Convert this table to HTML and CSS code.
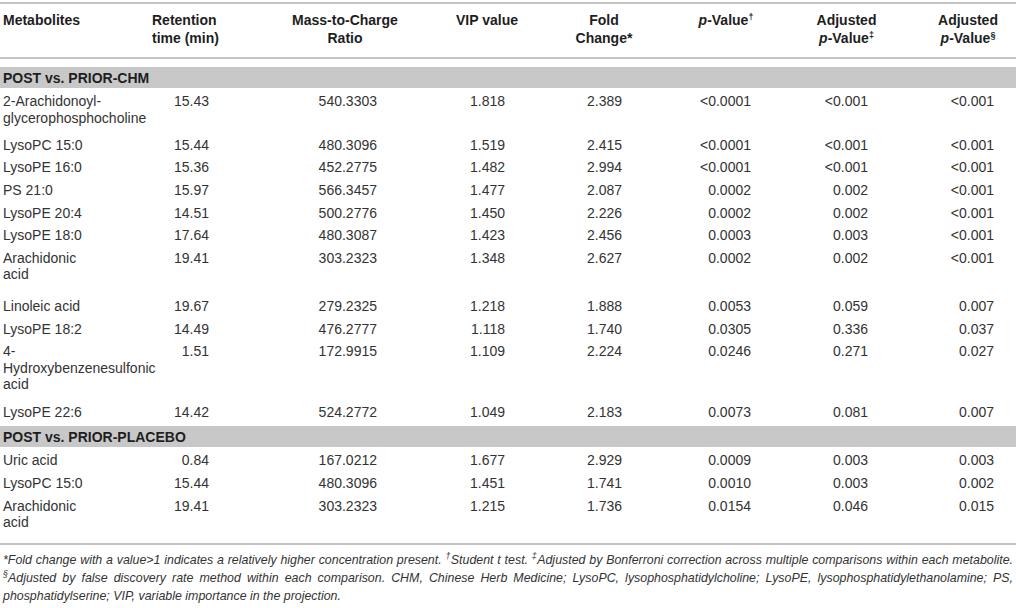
FILE: index.html
```html
<!DOCTYPE html>
<html lang="en">
<head>
<meta charset="utf-8">
<title>Metabolites table</title>
<link rel="stylesheet" href="styles.css">
</head>
<body>
<div class="table">
  <div class="row head">
    <div class="c1">Metabolites</div>
    <div class="c2">Retention<br>time (min)</div>
    <div class="c3">Mass-to-Charge<br>Ratio</div>
    <div class="c4">VIP value</div>
    <div class="c5">Fold<br>Change*</div>
    <div class="c6"><i>p</i>-Value<sup>†</sup></div>
    <div class="c7">Adjusted<br><i>p</i>-Value<sup>‡</sup></div>
    <div class="c8">Adjusted<br><i>p</i>-Value<sup>§</sup></div>
  </div>

  <div class="band">POST vs. PRIOR-CHM</div>

  <div class="row d two">
    <div class="c1">2-Arachidonoyl-<br>glycerophosphocholine</div>
    <div class="c2">15.43</div><div class="c3">540.3303</div><div class="c4">1.818</div><div class="c5">2.389</div>
    <div class="c6">&lt;0.0001</div><div class="c7">&lt;0.001</div><div class="c8">&lt;0.001</div>
  </div>
  <div class="row d">
    <div class="c1">LysoPC 15:0</div>
    <div class="c2">15.44</div><div class="c3">480.3096</div><div class="c4">1.519</div><div class="c5">2.415</div>
    <div class="c6">&lt;0.0001</div><div class="c7">&lt;0.001</div><div class="c8">&lt;0.001</div>
  </div>
  <div class="row d">
    <div class="c1">LysoPE 16:0</div>
    <div class="c2">15.36</div><div class="c3">452.2775</div><div class="c4">1.482</div><div class="c5">2.994</div>
    <div class="c6">&lt;0.0001</div><div class="c7">&lt;0.001</div><div class="c8">&lt;0.001</div>
  </div>
  <div class="row d">
    <div class="c1">PS 21:0</div>
    <div class="c2">15.97</div><div class="c3">566.3457</div><div class="c4">1.477</div><div class="c5">2.087</div>
    <div class="c6">0.0002</div><div class="c7">0.002</div><div class="c8">&lt;0.001</div>
  </div>
  <div class="row d">
    <div class="c1">LysoPE 20:4</div>
    <div class="c2">14.51</div><div class="c3">500.2776</div><div class="c4">1.450</div><div class="c5">2.226</div>
    <div class="c6">0.0002</div><div class="c7">0.002</div><div class="c8">&lt;0.001</div>
  </div>
  <div class="row d">
    <div class="c1">LysoPE 18:0</div>
    <div class="c2">17.64</div><div class="c3">480.3087</div><div class="c4">1.423</div><div class="c5">2.456</div>
    <div class="c6">0.0003</div><div class="c7">0.003</div><div class="c8">&lt;0.001</div>
  </div>
  <div class="row d two wide">
    <div class="c1">Arachidonic<br>acid</div>
    <div class="c2">19.41</div><div class="c3">303.2323</div><div class="c4">1.348</div><div class="c5">2.627</div>
    <div class="c6">0.0002</div><div class="c7">0.002</div><div class="c8">&lt;0.001</div>
  </div>
  <div class="row d">
    <div class="c1">Linoleic acid</div>
    <div class="c2">19.67</div><div class="c3">279.2325</div><div class="c4">1.218</div><div class="c5">1.888</div>
    <div class="c6">0.0053</div><div class="c7">0.059</div><div class="c8">0.007</div>
  </div>
  <div class="row d">
    <div class="c1">LysoPE 18:2</div>
    <div class="c2">14.49</div><div class="c3">476.2777</div><div class="c4">1.118</div><div class="c5">1.740</div>
    <div class="c6">0.0305</div><div class="c7">0.336</div><div class="c8">0.037</div>
  </div>
  <div class="row d three">
    <div class="c1">4-<br>Hydroxybenzenesulfonic<br>acid</div>
    <div class="c2">1.51</div><div class="c3">172.9915</div><div class="c4">1.109</div><div class="c5">2.224</div>
    <div class="c6">0.0246</div><div class="c7">0.271</div><div class="c8">0.027</div>
  </div>
  <div class="row d">
    <div class="c1">LysoPE 22:6</div>
    <div class="c2">14.42</div><div class="c3">524.2772</div><div class="c4">1.049</div><div class="c5">2.183</div>
    <div class="c6">0.0073</div><div class="c7">0.081</div><div class="c8">0.007</div>
  </div>

  <div class="band second">POST vs. PRIOR-PLACEBO</div>

  <div class="row d">
    <div class="c1">Uric acid</div>
    <div class="c2">0.84</div><div class="c3">167.0212</div><div class="c4">1.677</div><div class="c5">2.929</div>
    <div class="c6">0.0009</div><div class="c7">0.003</div><div class="c8">0.003</div>
  </div>
  <div class="row d">
    <div class="c1">LysoPC 15:0</div>
    <div class="c2">15.44</div><div class="c3">480.3096</div><div class="c4">1.451</div><div class="c5">1.741</div>
    <div class="c6">0.0010</div><div class="c7">0.003</div><div class="c8">0.002</div>
  </div>
  <div class="row d two">
    <div class="c1">Arachidonic<br>acid</div>
    <div class="c2">19.41</div><div class="c3">303.2323</div><div class="c4">1.215</div><div class="c5">1.736</div>
    <div class="c6">0.0154</div><div class="c7">0.046</div><div class="c8">0.015</div>
  </div>
</div>

<div class="notes">
  <div class="j">*Fold change with a value&gt;1 indicates a relatively higher concentration present. <sup>†</sup>Student t test. <sup>‡</sup>Adjusted by Bonferroni correction across multiple comparisons within each metabolite.</div>
  <div class="j"><sup>§</sup>Adjusted by false discovery rate method within each comparison. CHM, Chinese Herb Medicine; LysoPC, lysophosphatidylcholine; LysoPE, lysophosphatidylethanolamine; PS,</div>
  <div>phosphatidylserine; VIP, variable importance in the projection.</div>
</div>
</body>
</html>
```

FILE: styles.css
```css
* {
  box-sizing: border-box;
}

body {
  margin: 0;
  width: 1016px;
  background: #ffffff;
  color: #333333;
  font-family: "Liberation Sans", Arial, Helvetica, sans-serif;
}

.table {
  margin-top: 2px;
  border-top: 2px solid #c4c4c4;
  border-bottom: 2px solid #c4c4c4;
  padding-bottom: 7px;
}

.row {
  display: grid;
  grid-template-columns: 150px 112px 166px 118px 116px 128px 120px 106px;
  font-size: 14px;
  line-height: 16.5px;
  padding-top: 5.42px;
  padding-bottom: 0.75px;
}

.row.two {
  padding-bottom: 4.88px;
}

.row.two.wide {
  padding-bottom: 9.5px;
}

.row.three {
  padding-bottom: 5.6px;
}

.head {
  font-weight: bold;
  color: #1e1e1e;
  line-height: 18px;
  padding: 7px 0 10px;
  border-bottom: 2px solid #c4c4c4;
}

.c1 {
  padding-left: 3px;
  white-space: nowrap;
}

.head .c2 {
  padding-left: 2px;
}

.head .c3,
.head .c4,
.head .c5,
.head .c6 {
  text-align: center;
}

.head .c7 {
  text-align: center;
  padding-right: 7px;
}

.head .c8 {
  text-align: center;
  padding-left: 10px;
}

.d .c2 { text-align: right; padding-right: 53px; }
.d .c3 { text-align: right; padding-right: 51px; }
.d .c4 { text-align: right; padding-right: 41px; }
.d .c5 { text-align: right; padding-right: 40px; }
.d .c6 { text-align: right; padding-right: 39px; }
.d .c7 { text-align: right; padding-right: 42px; }
.d .c8 { text-align: right; padding-right: 22px; }

sup {
  font-size: 9px;
  line-height: 0;
  vertical-align: 5px;
}

.band {
  margin-top: 8px;
  height: 21px;
  padding: 1px 0 0 3px;
  background: #c8c8c8;
  color: #1e1e1e;
  font-size: 14px;
  font-weight: bold;
  line-height: 20px;
}

.band.second {
  margin-top: 5px;
}

.notes {
  margin-top: 6.5px;
  padding: 0 3px;
  font-size: 12.4px;
  font-style: italic;
  line-height: 18px;
  color: #333333;
}

.notes .j {
  text-align: justify;
  text-align-last: justify;
}
```
